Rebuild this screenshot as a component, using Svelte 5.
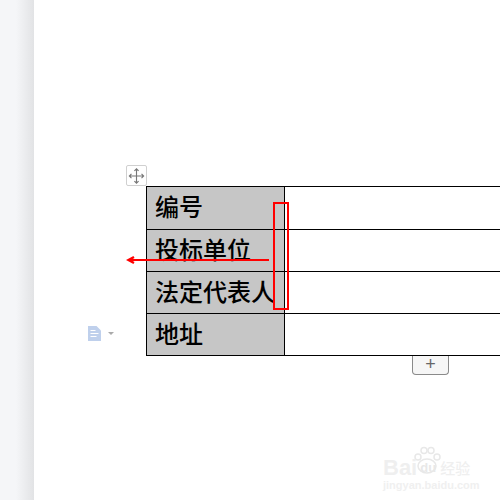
<script>
  const rows = ['编号', '投标单位', '法定代表人', '地址'];
</script>

<div class="app">
  <aside class="gutter"></aside>
  <main class="page">
    <div class="handle">
      <svg viewBox="0 0 20 20" width="20" height="20" fill="none" stroke="#777" stroke-width="1.200">
        <path d="M10 2.500v15M2.500 10h15M7.800 4.700L10 2.500l2.200 2.200M7.800 15.300L10 17.500l2.200-2.200M4.700 7.800L2.500 10l2.200 2.200M15.300 7.800L17.500 10l-2.200 2.200" />
      </svg>
    </div>
    <div class="tablewrap">
      <div class="side">
        <svg viewBox="0 0 13 15" width="13" height="15">
          <path d="M0 0h8.500L13 4.500V15H0z" fill="#bfd0ec" />
          <path d="M2.500 4.500h5M2.500 7.500h8M2.500 10.500h6" stroke="#fff" stroke-width="1" />
        </svg>
        <span class="caret"></span>
      </div>
      <div class="table">
        {#each rows as label}
          <div class="row">
            <div class="head">{label}</div>
            <div class="cell"></div>
          </div>
        {/each}
      </div>
    </div>
    <div class="addrow"><button class="add">+</button></div>
    <div class="mark">
      <svg class="paw" viewBox="0 0 32 28" width="32" height="28" fill="none" stroke="#e8e8e8" stroke-width="1.500">
        <ellipse cx="16" cy="20" rx="9" ry="7" />
        <circle cx="7" cy="11" r="3" /><circle cx="13" cy="4.500" r="3" /><circle cx="20" cy="4.500" r="3" /><circle cx="26" cy="11" r="3" />
      </svg>
      <div class="brand"><span class="bai">Bai</span><span class="du">du</span><span class="jy">经验</span></div>
      <div class="url">jingyan.baidu.com</div>
    </div>
    <div class="redbox"></div>
    <svg class="arrow" viewBox="0 0 143 10" width="143" height="10" fill="none" stroke="#f00" stroke-width="2">
      <path d="M2 5h141" />
      <path d="M8 2L2.500 5 8 8" stroke-width="2.400" />
    </svg>
  </main>
</div>

<style>
  :global(body) {
    margin: 0;
    background: #fff;
  }
  .app {
    display: flex;
    width: 500px;
    height: 500px;
    overflow: hidden;
  }
  .gutter {
    flex: 0 0 34px;
    background: linear-gradient(to right, #f5f6f8 0, #f5f6f8 16px, #e2e3e5 34px);
  }
  .page {
    position: relative;
    flex: 1;
    min-width: 0;
    display: flex;
    flex-direction: column;
    padding-top: 165px;
    box-sizing: border-box;
  }
  .handle {
    width: 19px;
    height: 19px;
    margin-left: 92px;
    border: 1px solid #d0d0d0;
    border-radius: 2px;
    display: flex;
    align-items: center;
    justify-content: center;
  }
  .tablewrap {
    position: relative;
    padding-left: 112px;
    width: 440px;
  }
  .side {
    position: absolute;
    left: 54px;
    top: 140px;
    display: flex;
    align-items: center;
    gap: 7px;
  }
  .caret {
    width: 0;
    height: 0;
    border-left: 3px solid transparent;
    border-right: 3px solid transparent;
    border-top: 3px solid #aaa;
  }
  .table {
    width: 354px;
    border-top: 1px solid #000;
    border-left: 1px solid #000;
  }
  .row {
    display: flex;
    height: 41px;
    border-bottom: 1px solid #000;
  }
  .row:first-child {
    height: 42px;
  }
  .head {
    flex: 0 0 138px;
    background: #c6c6c6;
    border-right: 1px solid #000;
    padding-left: 8px;
    box-sizing: border-box;
    font: 500 24px/37px "Noto Sans CJK SC", sans-serif;
    color: #000;
    white-space: nowrap;
  }
  .cell {
    flex: 1;
    background: #fff;
  }
  .addrow {
    padding-left: 378px;
  }
  .add {
    display: block;
    width: 37px;
    height: 19px;
    padding: 0 0 2px;
    border: 1px solid #8a8a8a;
    border-top: 0;
    border-radius: 0 0 4px 4px;
    background: #f6f6f6;
    color: #666;
    font: 18px/15px "Liberation Sans", sans-serif;
  }
  .mark {
    position: absolute;
    left: 349px;
    top: 446px;
    width: 90px;
    display: flex;
    flex-direction: column;
    align-items: flex-start;
  }
  .paw {
    margin-left: 28px;
  }
  .brand {
    display: flex;
    align-items: center;
    margin-top: -15px;
    font: 700 22px/17px "Liberation Sans", sans-serif;
    color: #efefef;
  }
  .du {
    font-size: 13px;
    margin: 0 4px 0 3px;
    color: #e8e8e8;
  }
  .jy {
    font: 500 15px/17px "Noto Sans CJK SC", sans-serif;
  }
  .url {
    font: 700 11px/12px "Liberation Sans", sans-serif;
    color: #f0f0f0;
    margin-top: 3px;
    white-space: nowrap;
  }
  .redbox {
    position: absolute;
    left: 239px;
    top: 202px;
    width: 16px;
    height: 108px;
    border: 2px solid #f00;
    box-sizing: border-box;
  }
  .arrow {
    position: absolute;
    left: 92px;
    top: 255px;
  }
</style>
